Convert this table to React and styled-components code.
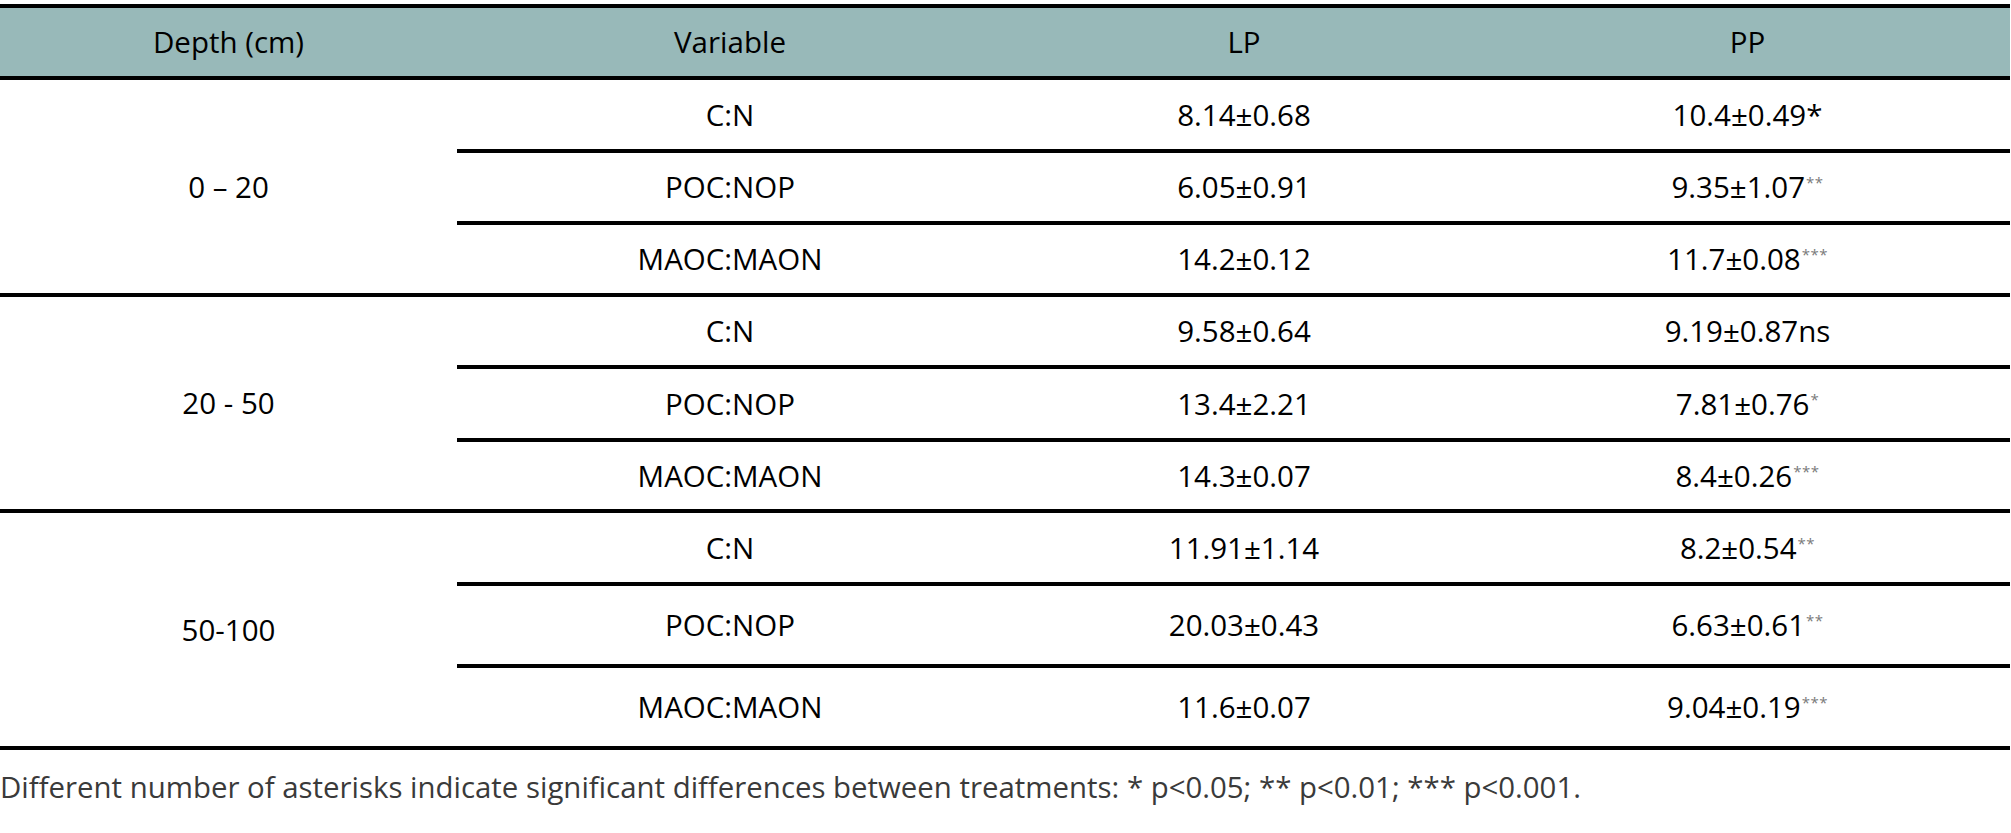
import React from 'react'
import styled, { createGlobalStyle } from 'styled-components'

const GlobalStyle = createGlobalStyle`
  html, body {
    margin: 0;
    padding: 0;
    background: #fff;
  }
  body {
    padding-top: 4px;
    font-family: 'Open Sans', 'Liberation Sans', sans-serif;
    font-size: 29.5px;
    color: #000;
  }
`

const COLS = '457px 546px 482px 525px'

const Table = styled.div`
  width: 2010px;
  border-top: 4px solid #000;
`

const HeaderRow = styled.div`
  display: grid;
  grid-template-columns: ${COLS};
  height: 68px;
  background: #98b9b9;
  border-bottom: 4px solid #000;
`

const Cell = styled.div`
  display: flex;
  align-items: center;
  justify-content: center;
  line-height: 1;
  white-space: nowrap;
`

const Group = styled.div`
  display: grid;
  grid-template-columns: 457px 1fr;
  border-bottom: 4px solid #000;
`

const Row = styled.div`
  display: grid;
  grid-template-columns: 546px 482px 525px;
  height: ${(p) => p.$h}px;
  & + & {
    border-top: 4px solid #000;
  }
`

const Sup = styled.span`
  font-size: 15px;
  color: #7a7a7a;
  align-self: flex-start;
  margin-top: ${(p) => p.$top || 0}px;
  margin-left: 1px;
  letter-spacing: 0.5px;
`

const Note = styled.p`
  margin: 17px 0 0;
  font-size: 29.4px;
  line-height: 40px;
  color: #3a3a3a;
  white-space: nowrap;
`

const groups = [
  {
    depth: '0 – 20',
    rows: [
      { h: 69, v: 'C:N', lp: '8.14±0.68', pp: '10.4±0.49*' },
      { h: 68, v: 'POC:NOP', lp: '6.05±0.91', pp: '9.35±1.07', sup: '**' },
      { h: 68, v: 'MAOC:MAON', lp: '14.2±0.12', pp: '11.7±0.08', sup: '***' },
    ],
  },
  {
    depth: '20 - 50',
    rows: [
      { h: 68, v: 'C:N', lp: '9.58±0.64', pp: '9.19±0.87ns' },
      { h: 69, v: 'POC:NOP', lp: '13.4±2.21', pp: '7.81±0.76', sup: '*' },
      { h: 67, v: 'MAOC:MAON', lp: '14.3±0.07', pp: '8.4±0.26', sup: '***' },
    ],
  },
  {
    depth: '50-100',
    rows: [
      { h: 69, v: 'C:N', lp: '11.91±1.14', pp: '8.2±0.54', sup: '**' },
      { h: 78, v: 'POC:NOP', lp: '20.03±0.43', pp: '6.63±0.61', sup: '**' },
      { h: 78, v: 'MAOC:MAON', lp: '11.6±0.07', pp: '9.04±0.19', sup: '***' },
    ],
  },
]

const supTop = (h) => Math.round((h - 22) / 2) - 1

export default function App() {
  return (
    <>
      <GlobalStyle />
      <Table>
        <HeaderRow>
          <Cell>Depth (cm)</Cell>
          <Cell>Variable</Cell>
          <Cell>LP</Cell>
          <Cell>PP</Cell>
        </HeaderRow>
        {groups.map((g) => (
          <Group key={g.depth}>
            <Cell>{g.depth}</Cell>
            <div>
              {g.rows.map((r) => (
                <Row key={r.v} $h={r.h}>
                  <Cell>{r.v}</Cell>
                  <Cell>{r.lp}</Cell>
                  <Cell>
                    {r.pp}
                    {r.sup && <Sup $top={supTop(r.h)}>{r.sup}</Sup>}
                  </Cell>
                </Row>
              ))}
            </div>
          </Group>
        ))}
      </Table>
      <Note>
        Different number of asterisks indicate significant differences between treatments: * p&lt;0.05; ** p&lt;0.01; *** p&lt;0.001.
      </Note>
    </>
  )
}
